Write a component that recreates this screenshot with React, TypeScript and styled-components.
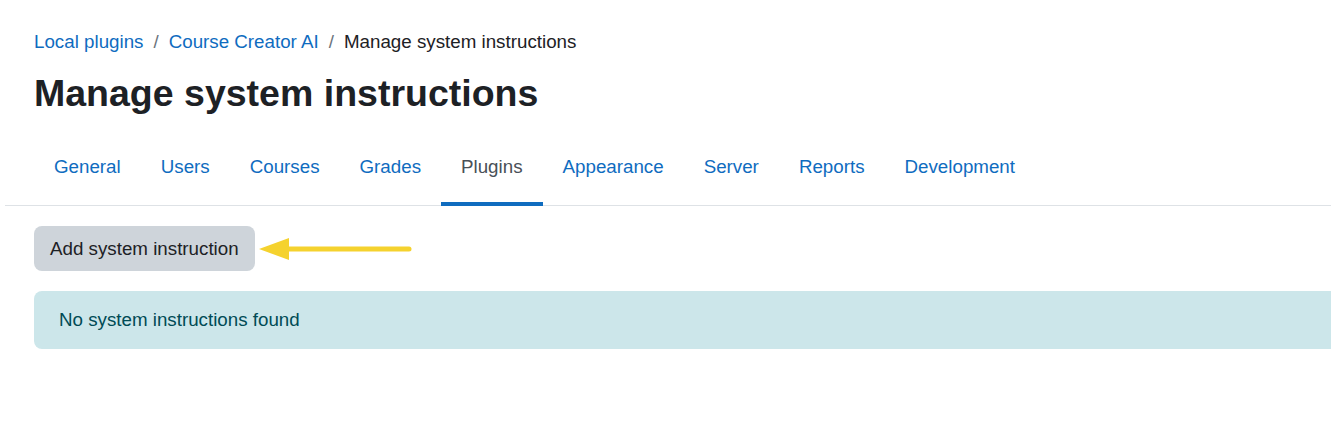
import React from "react";
import styled, { createGlobalStyle } from "styled-components";

const Global = createGlobalStyle`
  html, body { margin: 0; padding: 0; background: #fff; }
  body { font-family: "Liberation Sans", Arial, sans-serif; color: #1d2125; }
  * { box-sizing: border-box; }
`;

const Page = styled.div`
  padding: 29px 0 0 5px;
  width: 1331px;
  overflow: hidden;
`;

const Inner = styled.div`
  padding-left: 29px;
`;

const Breadcrumb = styled.nav`
  display: flex;
  align-items: center;
  font-size: 18.75px;
  line-height: 26px;
  height: 26px;
`;

const Crumb = styled.a<{ $current?: boolean }>`
  color: ${(p) => (p.$current ? "#1d2125" : "#0f6cbf")};
  text-decoration: none;
`;

const Sep = styled.span`
  color: #6a737b;
  padding: 0 10px;
`;

const Heading = styled.h1`
  margin: 16px 0 0;
  font-size: 37.5px;
  line-height: 45px;
  font-weight: 700;
  color: #1d2125;
`;

const Tabs = styled.div`
  margin-top: 20px;
  border-bottom: 1px solid #dee2e6;
  display: flex;
`;

const TabList = styled.div`
  display: flex;
  padding-left: 29px;
`;

const Tab = styled.a<{ $active?: boolean }>`
  display: block;
  padding: 18px 20px 22px;
  font-size: 18.75px;
  line-height: 26px;
  color: ${(p) => (p.$active ? "#495057" : "#0f6cbf")};
  text-decoration: none;
  border-bottom: 4px solid ${(p) => (p.$active ? "#0f6cbf" : "transparent")};
  margin-bottom: -1px;
`;

const ActionRow = styled.div`
  display: flex;
  align-items: center;
  margin-top: 20px;
`;

const Button = styled.button`
  font-family: inherit;
  font-size: 18.75px;
  line-height: 27px;
  color: #1d2125;
  background: #ced4da;
  border: none;
  border-radius: 8px;
  padding: 9px 16px;
  height: 45px;
`;

const Arrow = styled.svg`
  display: block;
  margin-left: 4px;
`;

const Alert = styled.div`
  margin-top: 20px;
  background: #cce6ea;
  color: #004b55;
  border-radius: 8px 0 0 8px;
  padding: 16px 25px;
  height: 58px;
  font-size: 18.75px;
  line-height: 26px;
  margin-right: -10px;
`;

export default function App() {
  const tabs = ["General", "Users", "Courses", "Grades", "Plugins", "Appearance", "Server", "Reports", "Development"];
  return (
    <>
      <Global />
      <Page>
        <Inner>
          <Breadcrumb>
            <Crumb href="#">Local plugins</Crumb>
            <Sep>/</Sep>
            <Crumb href="#">Course Creator AI</Crumb>
            <Sep>/</Sep>
            <Crumb $current>Manage system instructions</Crumb>
          </Breadcrumb>
          <Heading>Manage system instructions</Heading>
        </Inner>
        <Tabs>
          <TabList>
            {tabs.map((t) => (
              <Tab key={t} href="#" $active={t === "Plugins"}>
                {t}
              </Tab>
            ))}
          </TabList>
        </Tabs>
        <Inner>
          <ActionRow>
            <Button>Add system instruction</Button>
            <Arrow width="160" height="26" viewBox="0 0 160 26">
              <polygon points="0,13 30,2 30,24" fill="#f5d22e" />
              <line x1="28" y1="13" x2="150" y2="13" stroke="#f5d22e" strokeWidth="5" strokeLinecap="round" />
            </Arrow>
          </ActionRow>
          <Alert>No system instructions found</Alert>
        </Inner>
      </Page>
    </>
  );
}
